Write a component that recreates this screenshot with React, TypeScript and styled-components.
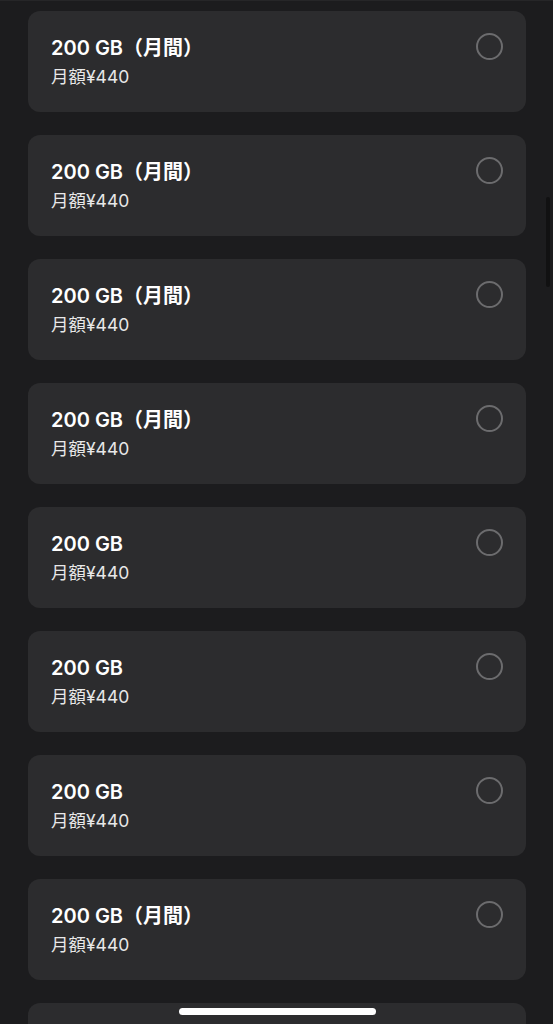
import styled, { createGlobalStyle } from "styled-components";

interface Plan {
  id: number;
  title: string;
  price: string;
}

const plans: Plan[] = [
  { id: 1, title: "200 GB（月間）", price: "月額¥440" },
  { id: 2, title: "200 GB（月間）", price: "月額¥440" },
  { id: 3, title: "200 GB（月間）", price: "月額¥440" },
  { id: 4, title: "200 GB（月間）", price: "月額¥440" },
  { id: 5, title: "200 GB", price: "月額¥440" },
  { id: 6, title: "200 GB", price: "月額¥440" },
  { id: 7, title: "200 GB", price: "月額¥440" },
  { id: 8, title: "200 GB（月間）", price: "月額¥440" },
  { id: 9, title: "200 GB", price: "月額¥440" },
];

const App = () => {
  return (
    <>
      <GlobalStyle />
      <Page>
        <PlanList>
          {plans.map((plan) => (
            <PlanCard key={plan.id}>
              <PlanText>
                <PlanTitle>{plan.title}</PlanTitle>
                <PlanPrice>{plan.price}</PlanPrice>
              </PlanText>
              <Radio />
            </PlanCard>
          ))}
        </PlanList>
        <ScrollThumb />
        <HomeIndicator />
      </Page>
    </>
  );
};

export default App;

const GlobalStyle = createGlobalStyle`
  html, body {
    margin: 0;
    padding: 0;
    overflow: hidden;
    background: #1c1c1e;
  }
  body {
    font-family: Inter, "Noto Sans CJK JP", sans-serif;
    color: #fff;
    -webkit-font-smoothing: antialiased;
  }
`;

const Page = styled.main`
  position: relative;
  width: 553px;
  height: 1024px;
  overflow: hidden;
  background: #1c1c1e;
  border-top: 1px solid #262628;
  box-sizing: border-box;
`;

const PlanList = styled.div`
  display: flex;
  flex-direction: column;
  gap: 23px;
  padding: 10px 27px 0 28px;
`;

const PlanCard = styled.div`
  display: flex;
  justify-content: space-between;
  align-items: flex-start;
  height: 101px;
  flex-shrink: 0;
  box-sizing: border-box;
  padding: 22px 23px 0 23px;
  background: #2c2c2e;
  border-radius: 12px;
`;

const PlanText = styled.div`
  display: flex;
  flex-direction: column;
  gap: 4px;
  padding-top: 3px;
`;

const PlanTitle = styled.span`
  font-size: 20px;
  line-height: 25px;
  font-weight: 600;
  color: #ffffff;
`;

const PlanPrice = styled.span`
  font-size: 17.5px;
  line-height: 23px;
  font-weight: 400;
  color: #e8e8e8;
`;

const Radio = styled.span`
  width: 27px;
  height: 27px;
  box-sizing: border-box;
  border: 2px solid #6c6c6e;
  border-radius: 50%;
  flex-shrink: 0;
`;

const ScrollThumb = styled.div`
  position: absolute;
  left: 546px;
  top: 196px;
  width: 4px;
  height: 90px;
  border-radius: 2px;
  background: #111112;
`;

const HomeIndicator = styled.div`
  position: absolute;
  left: 179px;
  top: 1007px;
  width: 197px;
  height: 7px;
  border-radius: 4px;
  background: #ffffff;
`;
